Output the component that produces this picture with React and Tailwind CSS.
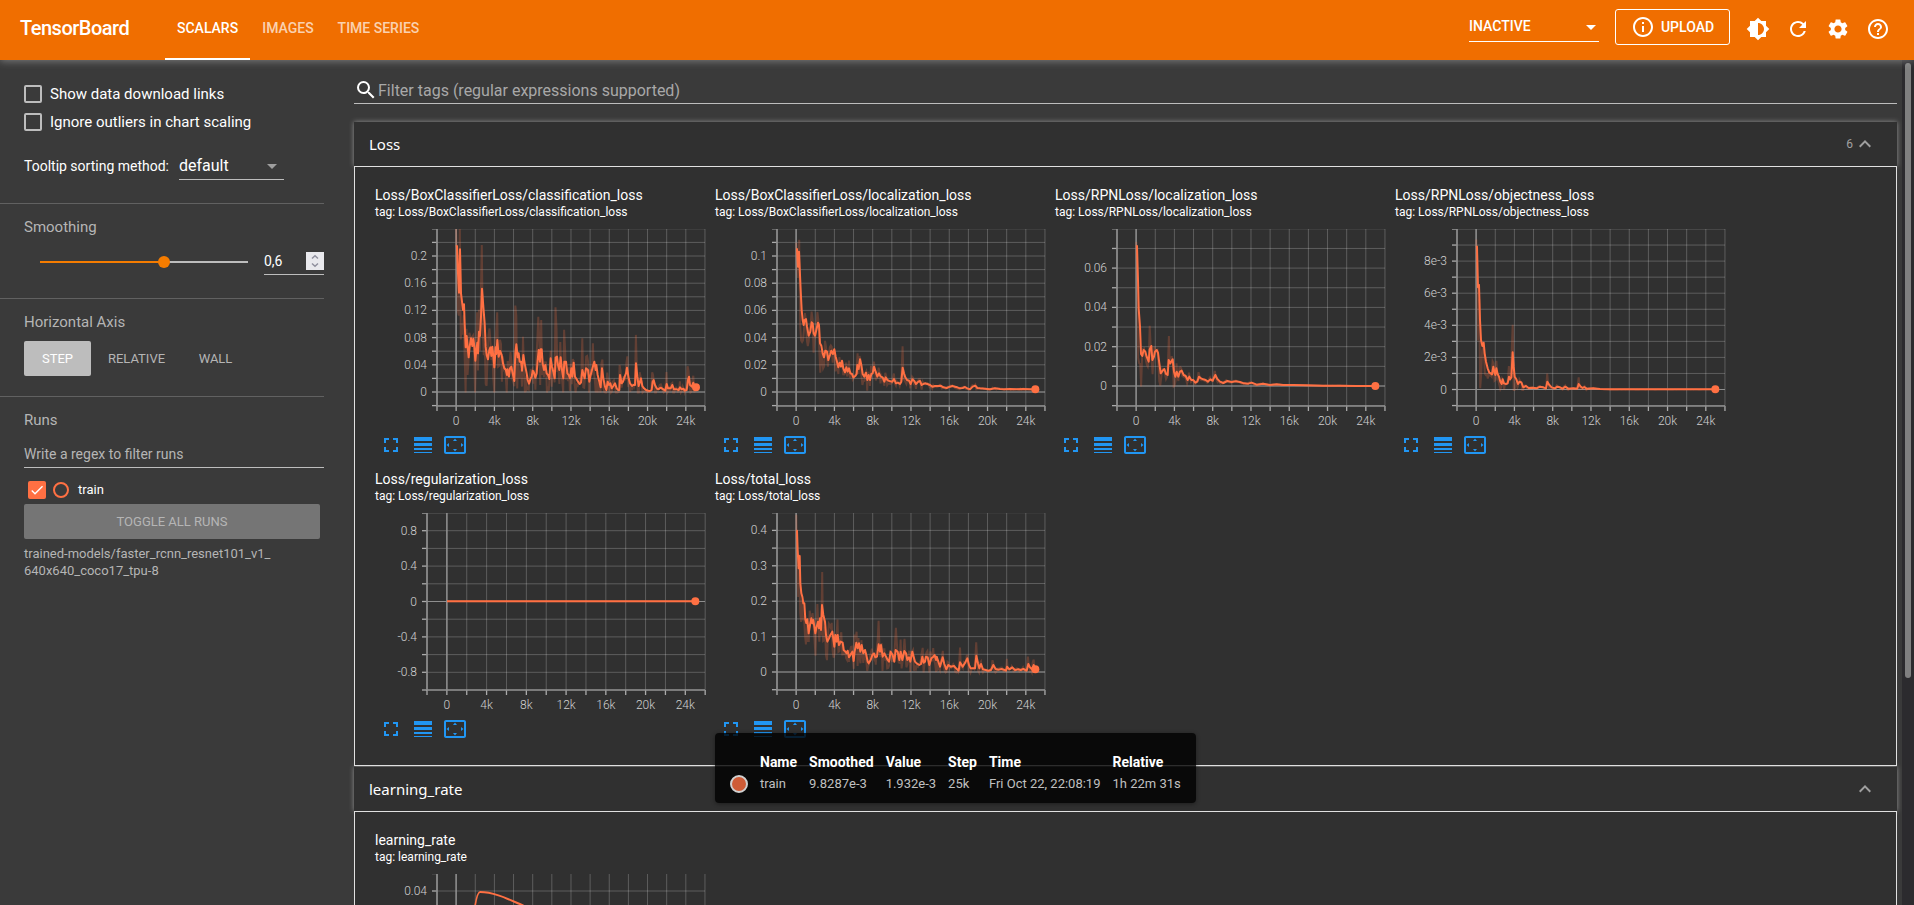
import React from "react";
import {
  MdArrowDropDown,
  MdBrightness6,
  MdCheck,
  MdExpandLess,
  MdFullscreen,
  MdHelpOutline,
  MdInfoOutline,
  MdLineWeight,
  MdRefresh,
  MdSearch,
  MdSettings,
  MdSettingsOverscan,
} from "react-icons/md";

const CLASSIFICATION =
  "318,560 321,558 324,640 327,698 330,568 333,700 336,725 339,750 342,733 344,790 347,862 350,828 353,862 356,892 359,860 363,835 367,858 370,836 373,860 376,902 379,870 382,848 384,880 387,815 390,828 393,770 396,686 400,740 404,790 407,860 410,885 414,898 418,870 421,862 424,888 427,860 430,890 433,922 437,862 439,882 442,840 446,890 450,873 455,885 459,910 463,925 467,928 471,945 473,928 477,950 480,925 484,920 488,940 493,963 496,880 499,853 503,892 506,880 509,905 513,905 516,932 520,885 524,910 527,925 530,940 533,960 537,971 541,958 545,950 548,932 552,938 556,953 560,940 563,900 566,870 570,905 572,868 575,868 578,910 582,930 586,915 590,940 594,945 598,957 602,895 606,920 610,935 614,955 617,893 621,890 624,915 628,930 632,892 636,930 640,955 643,905 648,905 652,940 656,945 660,955 664,925 667,950 671,908 675,950 680,958 684,965 689,972 693,968 697,930 701,945 704,955 708,925 714,930 718,965 722,945 726,930 730,915 733,905 737,930 739,915 743,945 748,965 752,982 756,925 760,955 765,980 769,990 773,965 777,975 781,970 785,985 790,978 795,970 800,985 804,990 808,990 810,945 815,970 819,965 824,950 828,940 831,923 836,955 840,970 846,978 850,975 855,975 858,910 862,950 866,978 870,965 873,955 877,978 882,985 888,990 895,992 900,993 905,990 908,965 911,960 915,975 920,985 925,988 932,983 940,988 946,992 950,972 954,985 958,985 962,985 967,975 972,988 980,988 986,990 990,982 995,988 1000,986 1004,992 1010,990 1014,960 1017,950 1020,975 1026,980 1030,968 1034,985 1038,982";
const BOX_LOCALIZATION =
  "289,207 291,207 294,260 297,215 299,262 302,330 305,390 308,420 311,435 314,420 318,417 321,440 326,467 331,455 335,427 338,430 341,460 345,467 349,450 354,428 357,435 360,490 364,497 368,520 372,532 376,512 381,515 385,540 390,525 394,512 399,522 403,508 407,530 411,545 415,562 419,548 423,560 426,542 430,565 435,577 439,562 443,575 447,565 451,580 456,582 460,592 466,588 470,582 472,555 476,567 480,538 484,555 488,582 493,590 498,578 502,600 506,585 510,600 514,582 518,580 522,560 527,575 532,590 537,580 542,590 548,592 553,605 557,592 562,600 570,604 577,605 582,597 588,610 594,608 600,612 604,605 608,563 612,580 616,592 621,600 627,602 632,612 637,598 643,603 648,612 655,605 660,603 665,615 670,612 675,610 682,612 690,615 697,620 705,618 715,618 722,617 730,622 740,624 750,620 757,618 765,620 772,622 780,625 788,624 795,621 802,625 810,628 818,620 826,617 832,624 840,625 855,626 870,628 885,625 900,627 915,628 930,627 950,628 970,627 990,628 1006,628";
const RPN_LOCALIZATION =
  "289,200 291,198 294,300 296,385 300,440 303,522 307,528 309,518 311,510 316,515 320,530 326,545 329,508 334,498 337,540 342,530 345,515 350,510 354,518 358,550 362,580 368,572 373,567 378,582 383,585 386,540 391,550 398,538 402,575 406,590 410,575 415,590 420,575 425,572 431,585 437,588 443,600 448,590 454,600 460,600 466,608 472,605 477,590 483,595 490,598 497,600 504,605 511,598 518,602 526,585 532,597 540,605 550,609 562,603 575,606 588,604 600,606 612,610 625,611 635,608 650,614 670,611 690,615 710,613 730,615 760,615 800,616 850,617 900,617 950,618 1006,618";
const OBJECTNESS =
  "289,198 291,200 294,322 297,315 300,420 303,480 307,498 311,488 314,520 318,545 323,565 328,578 332,580 336,583 340,560 343,575 346,585 349,565 353,582 357,590 361,605 365,612 368,598 372,610 378,612 383,610 387,590 390,598 394,592 398,517 401,560 404,590 409,598 414,612 419,605 424,607 430,622 438,618 446,624 458,623 470,625 480,620 490,622 498,625 502,605 508,615 515,622 525,625 532,620 540,622 548,626 556,620 565,626 580,625 592,626 596,612 602,620 608,624 613,621 620,626 640,625 660,627 690,628 1006,628";
const TOTAL =
  "289,212 291,212 293,270 296,325 299,288 301,370 304,400 307,410 310,430 313,430 316,478 319,490 322,478 326,520 330,495 334,475 337,490 340,480 343,500 346,520 350,500 354,485 357,505 360,475 363,510 366,435 370,465 375,485 378,525 382,545 387,535 391,525 397,515 401,545 403,560 406,525 410,545 413,525 417,555 422,545 428,548 431,570 436,575 440,580 443,572 447,592 451,585 457,575 461,603 464,575 469,548 473,565 477,550 481,575 485,555 490,580 495,570 499,585 503,605 506,610 512,600 517,585 522,580 526,592 531,590 536,553 540,575 543,555 548,590 553,580 558,590 563,600 567,605 572,575 578,585 583,605 587,570 593,575 598,600 602,575 607,600 613,573 618,580 622,600 627,592 631,605 637,575 641,590 645,605 650,610 658,615 663,612 667,590 671,608 675,605 678,590 683,592 688,615 694,595 700,590 704,585 708,600 710,590 715,605 720,620 728,592 733,612 739,628 745,615 752,620 762,618 768,625 776,632 780,607 788,620 797,605 802,595 807,615 812,625 820,625 825,625 829,587 834,610 838,625 843,612 849,628 857,630 865,632 873,630 880,615 887,627 895,629 905,627 912,629 918,632 921,620 928,628 937,622 945,630 955,628 962,630 970,627 980,632 985,612 990,622 996,628 1001,615 1006,628";

const PLOT_HEIGHT = 177;
const PLOT_RIGHT = 330;
const X_LABELS = ["0", "4k", "8k", "12k", "16k", "20k", "24k"];

const LOSS_CHARTS = [
  {
    name: "Loss/BoxClassifierLoss/classification_loss",
    zero: 163, minor: 13.6, up: 12, down: 1,
    labels: { 0: "0", 2: "0.04", 4: "0.08", 6: "0.12", 8: "0.16", 10: "0.2" },
    data: CLASSIFICATION, origin: [75, 507], noise: 0.7,
  },
  {
    name: "Loss/BoxClassifierLoss/localization_loss",
    zero: 163, minor: 13.6, up: 12, down: 1,
    labels: { 0: "0", 2: "0.02", 4: "0.04", 6: "0.06", 8: "0.08", 10: "0.1" },
    data: BOX_LOCALIZATION, origin: [45, 147], noise: 0.2,
  },
  {
    name: "Loss/RPNLoss/localization_loss",
    zero: 157, minor: 19.65, up: 8, down: 1,
    labels: { 0: "0", 2: "0.02", 4: "0.04", 6: "0.06" },
    data: RPN_LOCALIZATION, origin: [45, 147], noise: 0.15,
  },
  {
    name: "Loss/RPNLoss/objectness_loss",
    zero: 160.5, minor: 16.05, up: 10, down: 1,
    labels: { 0: "0", 2: "2e-3", 4: "4e-3", 6: "6e-3", 8: "8e-3" },
    data: OBJECTNESS, origin: [45, 147], noise: 0.2,
  },
  {
    name: "Loss/regularization_loss",
    axis: 52, step: 19.87,
    zero: 88.5, minor: 17.7, up: 5, down: 5,
    labels: { "-4": "-0.8", "-2": "-0.4", 0: "0", 2: "0.4", 4: "0.8" },
    data: "291,424 1036,424", origin: [75, 159], noise: 0,
  },
  {
    name: "Loss/total_loss",
    zero: 159, minor: 17.7, up: 9, down: 1,
    labels: { 0: "0", 2: "0.1", 4: "0.2", 6: "0.3", 8: "0.4" },
    data: TOTAL, origin: [45, 159], noise: 0.5, tooltip: true,
  },
];

const RATE_CHART = {
  name: "learning_rate",
  zero: 157, minor: 17.5, up: 9, down: 1,
  labels: { 8: "0.04" },
  xLabels: [],
  hidden: [7],
  curve: "M89 177 C94 90 98 18 105 18 C119 18 133 25 147 31 C190 52 240 120 321 157",
};

function parsePoints(chart) {
  const [ox, oy] = chart.origin;
  return chart.data.split(" ").map((pair) => {
    const [x, y] = pair.split(",").map(Number);
    return [(x - ox) / 3, (y - oy) / 3];
  });
}

function rawSeries(points, zero, noise) {
  const out = [];
  let seed = 7;
  let prev = points[0][1];
  let k = 0;
  for (let x = points[0][0]; x <= points[points.length - 1][0]; x += 0.957) {
    while (k < points.length - 2 && points[k + 1][0] < x) k += 1;
    const [x0, y0] = points[k];
    const [x1, y1] = points[k + 1];
    const y = y0 + ((y1 - y0) * (x - x0)) / (x1 - x0);
    seed = (seed * 16807) % 2147483647;
    const r = seed / 2147483647 - 0.5;
    const jitter = r * 2 * noise * Math.min(zero - y, 32);
    const raw = Math.min(zero + 0.5, Math.max(-4, y + (y - prev) * 2 + jitter));
    out.push(`${x.toFixed(1)},${raw.toFixed(1)}`);
    prev = y;
  }
  return out.join(" ");
}

function Chart({ chart }) {
  const axis = chart.axis ?? 62;
  const step = chart.step ?? 19.14;
  const xTicks = Array.from({ length: 15 }, (_, i) => axis + i * step).filter((x) => x < PLOT_RIGHT + 1);
  const yTicks = [];
  for (let i = -chart.down; i <= chart.up; i += 1) {
    if (!chart.hidden?.includes(i)) yTicks.push([i, chart.zero - i * chart.minor]);
  }
  const points = chart.data ? parsePoints(chart) : null;
  const end = points && points[points.length - 1];
  const clip = `clip-${chart.name.replace(/\W/g, "-")}`;
  return (
    <svg width="334" height="204" viewBox="0 0 334 204" className="block font-light" role="img" aria-label={chart.name}>
      <clipPath id={clip}>
        <rect x={axis} y="0" width={PLOT_RIGHT - axis} height={PLOT_HEIGHT} />
      </clipPath>
      <g stroke="#fff" strokeOpacity="0.22">
        {xTicks.map((x) => <line key={x} x1={x} x2={x} y1="0" y2={PLOT_HEIGHT} />)}
        {yTicks.map(([i, y]) => <line key={i} x1={axis} x2={PLOT_RIGHT} y1={y} y2={y} />)}
      </g>
      <g stroke="#ababab">
        {yTicks.map(([i, y]) => <line key={i} x1={axis - 5} x2={axis} y1={y} y2={y} strokeWidth="1.3" />)}
        {xTicks.map((x) => <line key={x} x1={x} x2={x} y1={PLOT_HEIGHT} y2={PLOT_HEIGHT + 5} strokeWidth="1.3" />)}
      </g>
      <g stroke="#8e8e8e">
        <line x1={axis} x2={axis} y1="0" y2={PLOT_HEIGHT} strokeWidth="1.7" />
        <line x1={axis} x2={PLOT_RIGHT} y1={PLOT_HEIGHT} y2={PLOT_HEIGHT} strokeWidth="1.7" />
        <line x1={axis + step} x2={axis + step} y1="0" y2={PLOT_HEIGHT} strokeWidth="1.5" />
        <line x1={axis} x2={PLOT_RIGHT} y1={chart.zero} y2={chart.zero} strokeWidth="1.2" />
      </g>
      <g fill="none" stroke="#ff7043" clipPath={`url(#${clip})`}>
        {points && (
          <>
            <polyline points={rawSeries(points, chart.zero, chart.noise)} strokeWidth="2" strokeOpacity="0.24" />
            <polyline points={points.map((p) => p.join(",")).join(" ")} strokeWidth="2" strokeLinejoin="round" />
          </>
        )}
        {chart.curve && <path d={chart.curve} strokeWidth="2" />}
      </g>
      {end && <circle cx={end[0]} cy={end[1]} r="4" fill="#ff7043" />}
      <g fill="#d0d0d0" fontSize="12">
        {yTicks.filter(([i]) => chart.labels[i]).map(([i, y]) => (
          <text key={i} x={axis - 10} y={y + 4} textAnchor="end">{chart.labels[i]}</text>
        ))}
        {(chart.xLabels ?? X_LABELS).map((label, i) => (
          <text key={label} x={axis + step * (1 + i * 2)} y="196" textAnchor="middle">{label}</text>
        ))}
      </g>
    </svg>
  );
}

function ChartTooltip() {
  const cols = [
    ["Name", "train"],
    ["Smoothed", "9.8287e-3"],
    ["Value", "1.932e-3"],
    ["Step", "25k"],
    ["Time", "Fri Oct 22, 22:08:19"],
    ["Relative", "1h 22m 31s"],
  ];
  return (
    <div className="absolute left-0 top-[264px] z-20 whitespace-nowrap rounded bg-black/80 px-[9px] pb-2 pt-[18px] shadow-[0_1px_4px_rgba(0,0,0,0.4)]">
      <table className="text-left">
        <thead>
          <tr className="h-[22px] text-sm leading-[22px] text-white">
            <th className="px-1.5" aria-label="Color" />
            {cols.map(([head]) => <th key={head} className="px-1.5 font-bold">{head}</th>)}
          </tr>
        </thead>
        <tbody>
          <tr className="h-[22px] text-[13px] leading-[22px] text-[#c0c0c0]">
            <td className="px-1.5">
              <span className="block size-[18px] rounded-full border-2 border-[#d0d0d0] bg-[#cf5c37]" />
            </td>
            {cols.map(([head, value]) => <td key={head} className="px-1.5">{value}</td>)}
          </tr>
        </tbody>
      </table>
    </div>
  );
}

function Card({ chart }) {
  return (
    <article className="relative w-[340px]">
      <h3 className="text-sm leading-5 text-white">{chart.name}</h3>
      <p className="mb-2.5 text-xs leading-[14px] text-white">tag: {chart.name}</p>
      <Chart chart={chart} />
      <div className="flex gap-2 pl-1 text-[#2196f3]">
        <button aria-label="Toggle full size"><MdFullscreen size={24} /></button>
        <button aria-label="Toggle logarithmic scale"><MdLineWeight size={24} /></button>
        <button aria-label="Fit domain to data"><MdSettingsOverscan size={24} /></button>
      </div>
      {chart.tooltip && <ChartTooltip />}
    </article>
  );
}

function Section({ title, count, charts }) {
  return (
    <section className="mb-px">
      <button className="flex h-11 w-full items-center justify-between bg-[#303030] pl-[15px] pr-5 shadow-[0_0_5px_rgba(255,255,255,0.45)]">
        <span className="font-['Noto_Sans',sans-serif] text-[15px] text-white">{title}</span>
        <span className="flex items-center text-xs text-[#a0a0a0]">
          {count}
          <MdExpandLess size={24} />
        </span>
      </button>
      <div className="relative flex flex-wrap gap-y-3 border border-[#e0e0e0] bg-[#303030] px-5 pb-6 pt-[18px]">
        {charts.map((chart) => <Card key={chart.name} chart={chart} />)}
      </div>
    </section>
  );
}

function Option({ label }) {
  return (
    <label className="flex h-7 items-center gap-2 text-[15px] text-white">
      <input type="checkbox" className="size-[18px] appearance-none rounded-xs border-2 border-[#bdbdbd]" />
      {label}
    </label>
  );
}

function Sidebar() {
  return (
    <aside className="w-[324px] shrink-0 text-[#b5b5b5]">
      <div className="border-b border-[#616161] pb-[23px] pl-6 pt-5">
        <Option label="Show data download links" />
        <Option label="Ignore outliers in chart scaling" />
        <label className="mt-4 flex items-end gap-2.5 text-sm text-white">
          <span className="pb-1">Tooltip sorting method:</span>
          <span className="relative flex w-[105px]">
            <select className="h-7 w-full appearance-none border-b border-[#bdbdbd] pt-px text-base text-white">
              <option>default</option>
            </select>
            <MdArrowDropDown size={24} className="pointer-events-none absolute right-0 top-0.5 text-[#9e9e9e]" />
          </span>
        </label>
      </div>
      <div className="border-b border-[#616161] pb-[23px] pl-6 pt-[13px]">
        <h3 className="text-[15px] leading-5">Smoothing</h3>
        <div className="mt-[11px] flex items-center justify-between pl-4">
          <input
            type="range"
            min="0"
            max="100"
            defaultValue="60"
            aria-label="Smoothing"
            className="h-0.5 w-[208px] appearance-none bg-linear-to-r from-[#f57c00] from-60% to-[#bdbdbd] to-60% [&::-webkit-slider-thumb]:size-3 [&::-webkit-slider-thumb]:appearance-none [&::-webkit-slider-thumb]:rounded-full [&::-webkit-slider-thumb]:bg-[#f57c00]"
          />
          <div className="flex h-[27px] w-[60px] items-center border-b border-[#bdbdbd]">
            <input type="text" inputMode="decimal" defaultValue="0,6" aria-label="Smoothing value" className="w-[42px] text-sm text-white" />
            <svg width="18" height="18" viewBox="0 0 18 18" className="shrink-0 bg-[#e9e9ed]" fill="none" stroke="#8f8f9d" strokeWidth="1.5" aria-hidden="true">
              <path d="M6 6.5 9 3.8 12 6.5M6 11.5 9 14.2 12 11.5" />
            </svg>
          </div>
        </div>
      </div>
      <div className="border-b border-[#616161] pb-5 pl-6 pt-[13px]">
        <h3 className="text-[15px] leading-5">Horizontal Axis</h3>
        <div className="mt-[9px] flex text-[13px]">
          <button className="h-[35px] w-[67px] rounded-xs bg-[#bdbdbd] text-white">STEP</button>
          <button className="h-[35px] w-[91px]">RELATIVE</button>
          <button className="h-[35px] w-[67px]">WALL</button>
        </div>
      </div>
      <div className="pl-6 pt-[13px]">
        <h3 className="text-[15px] leading-5">Runs</h3>
        <input
          type="text"
          placeholder="Write a regex to filter runs"
          aria-label="Write a regex to filter runs"
          className="mt-2.5 h-7 w-full border-b border-[#bdbdbd] text-sm placeholder:text-[#b5b5b5]"
        />
        <label className="flex items-center gap-[7px] pb-[5px] pl-1 pt-[13px] text-[13px] text-white">
          <span className="relative size-[18px]">
            <input type="checkbox" defaultChecked className="block size-[18px] appearance-none rounded-xs bg-[#ff7043]" />
            <MdCheck size={16} className="pointer-events-none absolute left-px top-px" />
          </span>
          <span className="size-4 rounded-full border-2 border-[#ff7043]" />
          <span className="pl-0.5 leading-[18px]">train</span>
        </label>
        <button className="h-[35px] w-[296px] rounded-xs bg-[#757575] text-[13px] text-[#b5b5b5]">TOGGLE ALL RUNS</button>
        <p className="mt-1.5 text-[13px] leading-[17px]">
          trained-models/faster_rcnn_resnet101_v1_<br />640x640_coco17_tpu-8
        </p>
      </div>
    </aside>
  );
}

function Header() {
  return (
    <header className="relative z-10 flex h-[60px] shrink-0 items-center bg-[#f06e00] pl-5 pr-6 text-white shadow-[0_1px_8px_rgba(255,255,255,0.35)]">
      <h1 className="w-[145px] pb-1 text-xl font-medium tracking-tight">TensorBoard</h1>
      <nav className="flex h-full text-sm font-medium">
        <a href="#scalars" className="flex items-center border-b-2 border-white px-3 pb-0.5">SCALARS</a>
        <a href="#images" className="flex items-center px-3 pb-1 text-white/70">IMAGES</a>
        <a href="#timeseries" className="flex items-center px-3 pb-1 text-white/70">TIME SERIES</a>
      </nav>
      <div className="ml-auto flex items-center">
        <div className="relative mr-4 flex w-[130px] pb-1">
          <select aria-label="Dashboard" className="h-7 w-full appearance-none border-b border-white pb-1 text-sm font-medium">
            <option>INACTIVE</option>
          </select>
          <MdArrowDropDown size={24} className="pointer-events-none absolute -right-1 top-px" />
        </div>
        <button className="mb-1.5 mr-4 flex h-9 w-[115px] items-center justify-center gap-1.5 rounded-[3px] border border-white pb-px text-sm font-medium">
          <MdInfoOutline size={24} />
          UPLOAD
        </button>
        <div className="flex gap-4 pb-0.5">
          <button aria-label="Toggle dark mode"><MdBrightness6 size={24} /></button>
          <button aria-label="Reload data"><MdRefresh size={24} /></button>
          <button aria-label="Settings"><MdSettings size={24} /></button>
          <button aria-label="Help"><MdHelpOutline size={24} /></button>
        </div>
      </div>
    </header>
  );
}

export default function App() {
  return (
    <div className="flex h-screen flex-col overflow-hidden bg-[#3a3a3a] font-[Roboto,sans-serif]">
      <Header />
      <div className="flex min-h-0 flex-1">
        <Sidebar />
        <main className="min-w-0 flex-1 overflow-hidden pl-[30px] pr-[5px] pt-4">
          <label className="mb-[18px] flex h-7 items-center border-b border-[#bdbdbd] text-white">
            <MdSearch size={24} className="shrink-0" />
            <input
              type="text"
              placeholder="Filter tags (regular expressions supported)"
              aria-label="Filter tags"
              className="w-full pt-0.5 text-base placeholder:text-[#a8a8a8]"
            />
          </label>
          <Section title="Loss" count="6" charts={LOSS_CHARTS} />
          <Section title="learning_rate" charts={[RATE_CHART]} />
        </main>
        <div className="w-3 shrink-0 bg-[#2c2b2e] pt-[3px]">
          <div className="mx-auto h-[73%] w-1.5 rounded-full bg-[#808080]" />
        </div>
      </div>
    </div>
  );
}
